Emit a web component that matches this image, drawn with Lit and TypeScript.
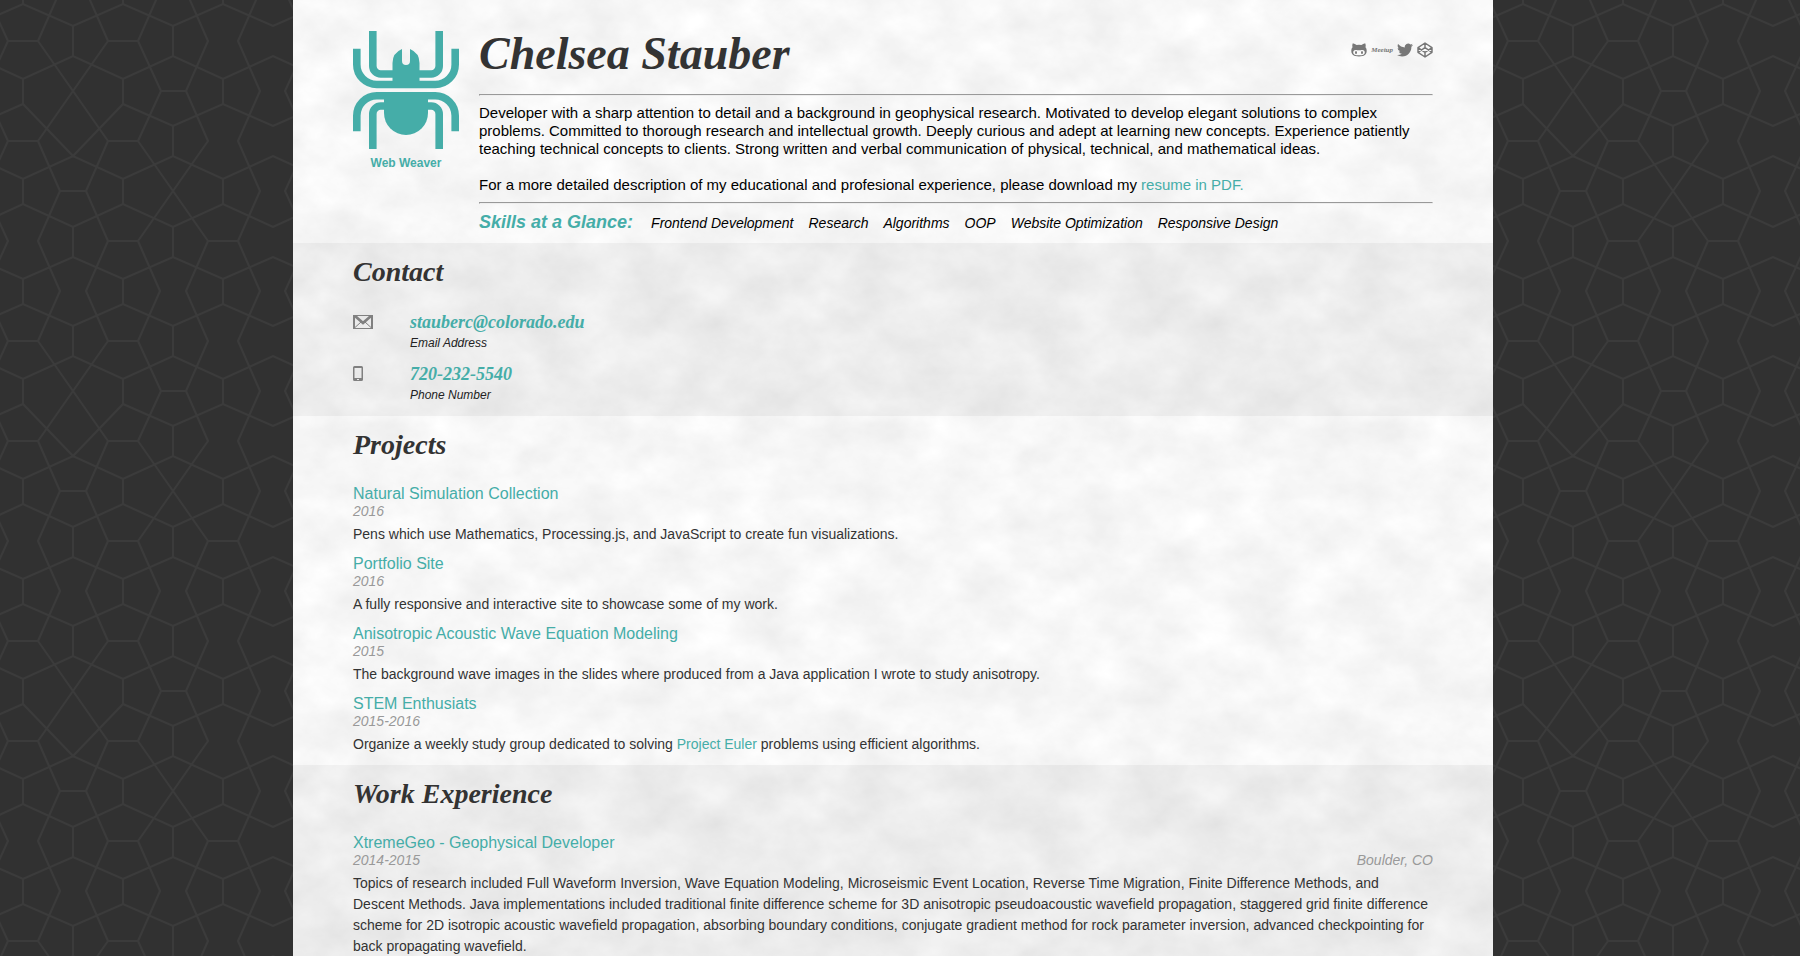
import { LitElement, html, css, svg, unsafeCSS } from "lit";
import { customElement, property } from "lit/decorators.js";

const svgUrl = (source: string) => unsafeCSS(`url("data:image/svg+xml,${encodeURIComponent(source)}")`);

/* 300px seamless tile of interlocking pentagons */
const zig = (a: number, b: number) => `M-27 ${b}L23 ${a}L73 ${b}L123 ${a}L173 ${b}L223 ${a}L273 ${b}L323 ${a}`;
const bars = (xs: number[], y1: number, y2: number) => xs.map((x) => `M${x} ${y1}V${y2}`).join("");
const flat = (x1: number, x2: number, y: number) => `M${x1} ${y}H${x2}`;
const pentagons = [
  zig(4, 26), zig(304, 326), zig(79, 56), zig(179, 156), zig(204, 227), zig(279, 257), zig(-21, -43),
  "M-27 126L23 104L73 156L123 104L173 126L223 104L273 126L323 104",
  bars([23, 123, 223], 79, 104), bars([23, 123, 223], 179, 204), bars([23, 123, 223], 279, 304), bars([23, 123, 223], -21, 4),
  bars([73, 173], 26, 56), bars([173], 126, 156), bars([73, 173], 227, 257),
  flat(8, 38, 41), flat(108, 138, 41), flat(161, 186, 91), flat(8, 38, 141), flat(108, 138, 141),
  flat(60, 86, 191), flat(108, 138, 241), flat(208, 238, 241),
  "M-15 -9L8 41L-15 91L8 141L-15 191L8 241L-15 291L8 341",
  "M285 -9L308 41L285 91L308 141L285 191L308 241L285 291L308 341",
  "M260 -9L238 41L260 91L238 141L260 191L238 241L260 291L238 341",
  "M60 -9L38 41L73 91L108 141L86 191L108 241L86 291L108 341",
  "M86 -9L108 41L73 91L38 141L60 191L38 241L60 291L38 341",
  "M160 -9L138 41L161 91L138 141L173 191L208 241L186 291L208 341",
  "M186 -9L208 41L186 91L208 141L173 191L138 241L160 291L138 341",
].join("");
const wallpaper = svgUrl(
  `<svg xmlns="http://www.w3.org/2000/svg" width="300" height="300"><rect width="300" height="300" fill="#313131"/><path d="${pentagons}" fill="none" stroke="#3b3b3b" stroke-width="2"/></svg>`,
);

/* soft mottled paper */
const paper = svgUrl(
  `<svg xmlns="http://www.w3.org/2000/svg" width="500" height="500"><filter id="p" x="0" y="0" width="100%" height="100%" color-interpolation-filters="sRGB"><feTurbulence type="fractalNoise" baseFrequency="0.018 0.024" numOctaves="5" seed="7" stitchTiles="stitch"/><feColorMatrix values="0.1 0 0 0 0.917 0.1 0 0 0 0.917 0.1 0 0 0 0.917 0 0 0 0 1"/></filter><rect width="500" height="500" filter="url(#p)"/></svg>`,
);

const spider = svg`
  <g fill="none" stroke="currentColor" stroke-width="7.6">
    <path d="M19.8 0V35a8 8 0 0 0 8 8H40M86.2 0V35a8 8 0 0 1-8 8H66"/>
    <path d="M3.8 17.7V33.5a20 20 0 0 0 20 20H82.2a20 20 0 0 0 20-20V17.7"/>
    <path d="M3.8 100.3V84.8a20 20 0 0 1 20-20H82.2a20 20 0 0 1 20 20V100.3"/>
    <path d="M19.8 118V83a8 8 0 0 1 8-8H33M86.2 118V83a8 8 0 0 0-8-8H73"/>
  </g>
  <path fill="currentColor" d="M39.5 52V32Q39.5 22 49 18V30a4 4 0 0 0 8 0V18Q66.5 22 66.5 32V52z"/>
  <path fill="currentColor" d="M31 64H75V82a22 22 0 0 1-44 0z"/>`;

@customElement("social-links")
class SocialLinks extends LitElement {
  static styles = css`
    :host { display: block; }
    .list { display: flex; align-items: center; gap: 4px; margin: 0; padding: 0; list-style: none; }
    .link { display: block; color: #777; text-decoration: none; font: bold italic 7px/16px "Liberation Serif", serif; }
    .icon { display: block; width: 16px; height: 16px; }
  `;
  render() {
    return html`
      <ul class="list">
        <li><a class="link" href="#github" aria-label="GitHub"><svg class="icon" viewBox="0 0 16 16" fill="currentColor">
          <path fill-rule="evenodd" d="M1.6 1.6C3 1.6 4.6 2.3 5.6 3Q8 2.7 10.4 3C11.4 2.3 13 1.6 14.4 1.6Q15 3.6 14.5 5.2Q15.8 6.6 15.7 8.8C15.6 12.9 13.4 14.4 8 14.4S.4 12.9.3 8.8Q.2 6.6 1.5 5.2Q1 3.6 1.6 1.6zM4.6 8C2.9 8 2.2 9.2 2.2 10.4C2.2 12.4 4 13.2 8 13.2S13.8 12.4 13.8 10.4C13.8 9.2 13.1 8 11.4 8C10 8 9.4 8.3 8 8.3S6 8 4.6 8z"/>
          <ellipse cx="5" cy="10.4" rx="1" ry="1.5"/><ellipse cx="11" cy="10.4" rx="1" ry="1.5"/></svg></a></li>
        <li><a class="link" href="#meetup">Meetup</a></li>
        <li><a class="link" href="#twitter" aria-label="Twitter"><svg class="icon" viewBox="0 0 24 24" fill="currentColor">
          <path d="M23.954 4.569a10 10 0 01-2.825.775 4.958 4.958 0 002.163-2.723c-.951.555-2.005.959-3.127 1.184a4.92 4.92 0 00-8.384 4.482C7.691 8.094 4.066 6.13 1.64 3.161a4.822 4.822 0 00-.666 2.475c0 1.71.87 3.213 2.188 4.096a4.904 4.904 0 01-2.228-.616v.061a4.923 4.923 0 003.946 4.827 4.996 4.996 0 01-2.212.085 4.937 4.937 0 004.604 3.417 9.868 9.868 0 01-6.102 2.105c-.39 0-.779-.023-1.17-.067a13.995 13.995 0 007.557 2.209c9.054 0 13.999-7.496 13.999-13.986 0-.209 0-.42-.015-.63a9.936 9.936 0 002.46-2.548z"/></svg></a></li>
        <li><a class="link" href="#codepen" aria-label="CodePen"><svg class="icon" viewBox="0 0 24 24" fill="none" stroke="currentColor" stroke-width="2.2" stroke-linejoin="round">
          <path d="M12 1.5L22.5 8.5V15.5L12 22.5L1.5 15.5V8.5zM12 22.5V15.5M22.5 8.5L12 15.5L1.5 8.5M1.5 15.5L12 8.5L22.5 15.5M12 1.5V8.5"/></svg></a></li>
      </ul>`;
  }
}

@customElement("resume-entry")
class ResumeEntry extends LitElement {
  static styles = css`
    :host { display: block; }
    .title { margin: 0; font-size: 16px; line-height: 18px; font-weight: normal; color: #45ada8; }
    .title a { color: inherit; text-decoration: none; }
    .meta { display: flex; justify-content: space-between; font-size: 14px; line-height: 16px; font-style: italic; color: #999; }
    .text { margin: 5px 0 0; font-size: 14px; line-height: 21px; color: #333; }
  `;
  @property() heading = "";
  @property() dates = "";
  @property() place = "";
  render() {
    return html`
      <h3 class="title"><a href="#entry">${this.heading}</a></h3>
      <div class="meta"><span>${this.dates}</span><span>${this.place}</span></div>
      <p class="text"><slot></slot></p>`;
  }
}

@customElement("app-root")
class AppRoot extends LitElement {
  static styles = css`
    :host {
      display: flex; min-height: 100vh; box-sizing: border-box; padding-right: 14px;
      font-family: "Liberation Sans", Arial, sans-serif; background: ${wallpaper};
    }
    * { box-sizing: border-box; }
    a { color: #45ada8; text-decoration: none; }
    .sheet { display: flex; flex-direction: column; width: 100%; max-width: 1200px; margin: 0 auto; background: ${paper}; }
    .header { display: flex; gap: 20px; padding: 31px 60px 10px; }
    .brand { flex: none; color: #45ada8; text-align: center; font-size: 12px; line-height: 14px; font-weight: bold; }
    .spider { display: block; width: 106px; height: 118px; margin-bottom: 7px; }
    .intro { flex: 1; min-width: 0; color: #000; }
    .top { display: flex; justify-content: space-between; align-items: flex-start; margin-bottom: 17px; }
    .name, .heading { margin: 0; font-family: "Liberation Serif", serif; font-style: italic; font-weight: bold; color: #333; }
    .name { font-size: 46px; line-height: 46px; }
    .social { margin-top: 11px; }
    .rule { margin: 8px 0; border: 1px solid; border-color: #999 #eee #eee #999; }
    .lead { margin: 0 0 18px; font-size: 15px; line-height: 18px; }
    .lead.last { margin: 0; }
    .skills { display: flex; align-items: baseline; gap: 18px; }
    .label { margin: 0; font-size: 18px; line-height: 20px; font-style: italic; color: #45ada8; }
    .list { display: flex; flex-wrap: wrap; gap: 15px; margin: 0; padding: 0; list-style: none; font-size: 14px; line-height: 20px; font-style: italic; }
    .section { padding: 13px 60px 10px; }
    .section.shaded { background: rgba(0, 0, 0, 0.04); }
    .section.contact { padding-bottom: 14px; }
    .section.grow { flex: 1; padding-bottom: 0; }
    .heading { font-size: 28px; line-height: 32px; margin-bottom: 24px; }
    .entries { display: grid; gap: 10px; }
    .cards { display: grid; grid-template-columns: 57px 1fr; row-gap: 14px; margin: 0; }
    .glyph { display: block; height: 16px; margin-top: 2px; color: #808080; }
    .value { font: italic bold 18px/20px "Liberation Serif", serif; }
    .caption { margin-top: 4px; font-size: 12px; line-height: 14px; font-style: italic; color: #222; }
  `;

  private skills = ["Frontend Development", "Research", "Algorithms", "OOP", "Website Optimization", "Responsive Design"];

  render() {
    return html`
      <main class="sheet">
        <header class="header">
          <div class="brand">
            <svg class="spider" viewBox="0 0 106 118" aria-hidden="true">${spider}</svg>
            Web Weaver
          </div>
          <div class="intro">
            <div class="top">
              <h1 class="name">Chelsea Stauber</h1>
              <social-links class="social"></social-links>
            </div>
            <hr class="rule">
            <p class="lead">Developer with a sharp attention to detail and a background in geophysical research. Motivated to develop elegant solutions to complex problems. Committed to thorough research and intellectual growth. Deeply curious and adept at learning new concepts. Experience patiently teaching technical concepts to clients. Strong written and verbal communication of physical, technical, and mathematical ideas.</p>
            <p class="lead last">For a more detailed description of my educational and profesional experience, please download my <a href="#resume">resume in PDF.</a></p>
            <hr class="rule">
            <div class="skills">
              <h2 class="label">Skills at a Glance:</h2>
              <ul class="list">${this.skills.map((s) => html`<li>${s}</li>`)}</ul>
            </div>
          </div>
        </header>

        <section class="section shaded contact">
          <h2 class="heading">Contact</h2>
          <div class="cards">
            <svg class="glyph" width="20" viewBox="0 0 20 16" fill="none" stroke="currentColor" aria-hidden="true">
              <path stroke-width="2" d="M1 1V15M19 1V15"/>
              <path stroke-width="1" d="M0 1.5H20M0 14.5H20M2 13.5L8 8M18 13.5L12 8"/>
              <path stroke-width="2.8" d="M2 2L10 9L18 2"/>
            </svg>
            <div>
              <a class="value" href="mailto:stauberc@colorado.edu">stauberc@colorado.edu</a>
              <div class="caption">Email Address</div>
            </div>
            <svg class="glyph" width="10" viewBox="0 0 10 16" aria-hidden="true">
              <path fill="currentColor" fill-rule="evenodd" d="M1.5 0H8.5Q10 0 10 1.5V13.5Q10 15 8.5 15H1.5Q0 15 0 13.5V1.5Q0 0 1.5 0zM1.5 2V12H8.5V2zM4 13V14H6V13z"/>
            </svg>
            <div>
              <a class="value" href="tel:720-232-5540">720-232-5540</a>
              <div class="caption">Phone Number</div>
            </div>
          </div>
        </section>

        <section class="section">
          <h2 class="heading">Projects</h2>
          <div class="entries">
            <resume-entry heading="Natural Simulation Collection" dates="2016">Pens which use Mathematics, Processing.js, and JavaScript to create fun visualizations.</resume-entry>
            <resume-entry heading="Portfolio Site" dates="2016">A fully responsive and interactive site to showcase some of my work.</resume-entry>
            <resume-entry heading="Anisotropic Acoustic Wave Equation Modeling" dates="2015">The background wave images in the slides where produced from a Java application I wrote to study anisotropy.</resume-entry>
            <resume-entry heading="STEM Enthusiats" dates="2015-2016">Organize a weekly study group dedicated to solving <a href="#euler">Project Euler</a> problems using efficient algorithms.</resume-entry>
          </div>
        </section>

        <section class="section shaded grow">
          <h2 class="heading">Work Experience</h2>
          <div class="entries">
            <resume-entry heading="XtremeGeo - Geophysical Developer" dates="2014-2015" place="Boulder, CO">Topics of research included Full Waveform Inversion, Wave Equation Modeling, Microseismic Event Location, Reverse Time Migration, Finite Difference Methods, and Descent Methods. Java implementations included traditional finite difference scheme for 3D anisotropic pseudoacoustic wavefield propagation, staggered grid finite difference scheme for 2D isotropic acoustic wavefield propagation, absorbing boundary conditions, conjugate gradient method for rock parameter inversion, advanced checkpointing for back propagating wavefield.</resume-entry>
          </div>
        </section>
      </main>`;
  }
}
